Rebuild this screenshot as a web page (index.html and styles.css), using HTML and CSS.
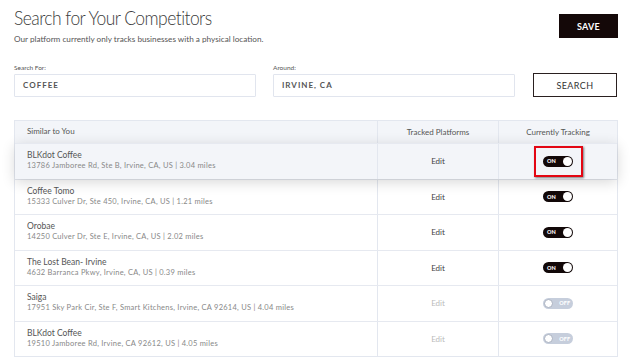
FILE: index.html
```html
<!DOCTYPE html>
<html lang="en">
<head>
    <meta charset="UTF-8">
    <meta name="viewport" content="width=device-width, initial-scale=1.0">
    <title>Search for Your Competitors</title>
    <link rel="stylesheet" href="styles.css">
</head>
<body>
    <div class="page">
        <div class="top">
            <div>
                <h1>Search for Your Competitors</h1>
                <p class="sub">Our platform currently only tracks businesses with a physical location.</p>
            </div>
            <button class="btn-save">SAVE</button>
        </div>

        <div class="search">
            <div class="field">
                <label>Search For:</label>
                <div class="input">COFFEE</div>
            </div>
            <div class="field">
                <label>Around:</label>
                <div class="input">IRVINE, CA</div>
            </div>
            <button class="btn-search">SEARCH</button>
        </div>

        <div class="table">
            <div class="row head">
                <div class="cell name-cell">Similar to You</div>
                <div class="cell center">Tracked Platforms</div>
                <div class="cell center">Currently Tracking</div>
            </div>
            <div class="row active">
                <div class="cell name-cell">
                    <div class="name">BLKdot Coffee</div>
                    <div class="addr">13786 Jamboree Rd, Ste B, Irvine, CA, US | 3.04 miles</div>
                </div>
                <div class="cell center"><span class="edit">Edit</span></div>
                <div class="cell center">
                    <span class="highlight"><span class="toggle on"><span class="lbl">ON</span><span class="knob"></span></span></span>
                </div>
            </div>
            <div class="row">
                <div class="cell name-cell">
                    <div class="name">Coffee Tomo</div>
                    <div class="addr">15333 Culver Dr, Ste 450, Irvine, CA, US | 1.21 miles</div>
                </div>
                <div class="cell center"><span class="edit">Edit</span></div>
                <div class="cell center"><span class="toggle on"><span class="lbl">ON</span><span class="knob"></span></span></div>
            </div>
            <div class="row">
                <div class="cell name-cell">
                    <div class="name">Orobae</div>
                    <div class="addr">14250 Culver Dr, Ste E, Irvine, CA, US | 2.02 miles</div>
                </div>
                <div class="cell center"><span class="edit">Edit</span></div>
                <div class="cell center"><span class="toggle on"><span class="lbl">ON</span><span class="knob"></span></span></div>
            </div>
            <div class="row">
                <div class="cell name-cell">
                    <div class="name">The Lost Bean- Irvine</div>
                    <div class="addr">4632 Barranca Pkwy, Irvine, CA, US | 0.39 miles</div>
                </div>
                <div class="cell center"><span class="edit">Edit</span></div>
                <div class="cell center"><span class="toggle on"><span class="lbl">ON</span><span class="knob"></span></span></div>
            </div>
            <div class="row">
                <div class="cell name-cell">
                    <div class="name">Saiga</div>
                    <div class="addr">17951 Sky Park Cir, Ste F, Smart Kitchens, Irvine, CA 92614, US | 4.04 miles</div>
                </div>
                <div class="cell center"><span class="edit off">Edit</span></div>
                <div class="cell center"><span class="toggle off"><span class="knob"></span><span class="lbl">OFF</span></span></div>
            </div>
            <div class="row">
                <div class="cell name-cell">
                    <div class="name">BLKdot Coffee</div>
                    <div class="addr">19510 Jamboree Rd, Irvine, CA 92612, US | 4.05 miles</div>
                </div>
                <div class="cell center"><span class="edit off">Edit</span></div>
                <div class="cell center"><span class="toggle off"><span class="knob"></span><span class="lbl">OFF</span></span></div>
            </div>
        </div>
    </div>
</body>
</html>
```

FILE: styles.css
```css
body {
    margin: 0;
    padding: 0;
    background: #fff;
    font-family: 'Lato', sans-serif;
    color: #444;
}

.page {
    width: 604px;
    padding: 0 14px;
}

.top {
    display: flex;
    justify-content: space-between;
    align-items: flex-start;
    height: 60px;
}

h1 {
    font-weight: 300;
    font-size: 17.5px;
    margin: 7px 0 0;
    color: #3c3c3c;
    letter-spacing: -0.55px;
    transform: scaleY(1.08);
    transform-origin: left top;
}

.sub {
    font-size: 8.2px;
    margin: 6px 0 0;
    color: #555;
}

.btn-save {
    margin-top: 14px;
    width: 59px;
    height: 24px;
    background: #140808;
    color: #fff;
    border: none;
    font-family: 'Lato', sans-serif;
    font-weight: 700;
    font-size: 9px;
    letter-spacing: 0.3px;
}

.search {
    display: grid;
    grid-template-columns: 242px 242px 85px;
    column-gap: 17px;
    align-items: end;
    margin-top: 4px;
}

.field label {
    display: block;
    font-size: 6.5px;
    color: #555;
    margin-bottom: 3px;
}

.input {
    height: 21px;
    border: 1px solid #e1e5ee;
    border-radius: 1px;
    font-size: 8px;
    font-weight: 700;
    letter-spacing: 1px;
    color: #555;
    padding-left: 8px;
    line-height: 21px;
}

.btn-search {
    height: 24px;
    background: #fff;
    border: 1.5px solid #2a2020;
    font-family: 'Lato', sans-serif;
    font-size: 9px;
    letter-spacing: 0.4px;
    color: #333;
    margin-left: 1px;
}

.table {
    margin-top: 23px;
    border: 1px solid #e3e7ef;
}

.row {
    display: grid;
    grid-template-columns: 362px 121px 1fr;
    height: 34.5px;
    border-top: 1px solid #e6e9f0;
    position: relative;
    background: #fff;
}

.row.head {
    border-top: none;
    height: 22px;
    background: #f3f5f9;
    font-size: 8px;
    color: #555;
}

.row.active {
    background: #f3f5f9;
    z-index: 2;
    box-shadow: 0 3px 14px rgba(0, 0, 0, 0.16);
}

.cell {
    display: flex;
    flex-direction: column;
    justify-content: center;
    border-left: 1px solid #e3e7ef;
}

.cell.name-cell {
    border-left: none;
    padding-left: 12px;
    padding-bottom: 2px;
}

.cell.center {
    align-items: center;
}

.name {
    font-size: 8.5px;
    color: #555;
}

.addr {
    font-size: 7.5px;
    letter-spacing: 0.25px;
    color: #888;
    margin-top: 1px;
}

.edit {
    font-size: 8px;
    color: #444;
}

.edit.off {
    color: #bbb;
}

.highlight {
    display: flex;
    align-items: center;
    justify-content: center;
    width: 45px;
    height: 27px;
    border: 2px solid #e30613;
    box-shadow: 1px 1px 2px rgba(0, 0, 0, 0.5);
}

.toggle {
    display: flex;
    align-items: center;
    justify-content: space-between;
    width: 30px;
    height: 11px;
    border-radius: 6px;
    padding: 0 1px 0 4px;
    box-sizing: border-box;
    font-size: 5.5px;
    font-weight: 900;
    color: #fff;
}

.toggle.on {
    background: #120808;
}

.toggle.off {
    background: #c6cedc;
    padding: 0 3px 0 1px;
}

.knob {
    width: 9px;
    height: 9px;
    border-radius: 50%;
    background: #fff;
    box-sizing: border-box;
}

.toggle.off .knob {
    border: 1px solid #a9b1c0;
}
```
